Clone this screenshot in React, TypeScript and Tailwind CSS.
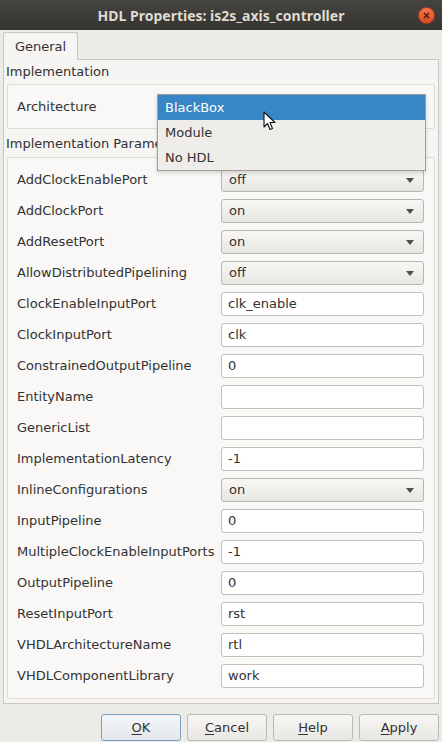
import React from 'react';

type Row = { label: string; kind: 'combo' | 'text'; value: string };

const rows: Row[] = [
  { label: 'AddClockEnablePort', kind: 'combo', value: 'off' },
  { label: 'AddClockPort', kind: 'combo', value: 'on' },
  { label: 'AddResetPort', kind: 'combo', value: 'on' },
  { label: 'AllowDistributedPipelining', kind: 'combo', value: 'off' },
  { label: 'ClockEnableInputPort', kind: 'text', value: 'clk_enable' },
  { label: 'ClockInputPort', kind: 'text', value: 'clk' },
  { label: 'ConstrainedOutputPipeline', kind: 'text', value: '0' },
  { label: 'EntityName', kind: 'text', value: '' },
  { label: 'GenericList', kind: 'text', value: '' },
  { label: 'ImplementationLatency', kind: 'text', value: '-1' },
  { label: 'InlineConfigurations', kind: 'combo', value: 'on' },
  { label: 'InputPipeline', kind: 'text', value: '0' },
  { label: 'MultipleClockEnableInputPorts', kind: 'text', value: '-1' },
  { label: 'OutputPipeline', kind: 'text', value: '0' },
  { label: 'ResetInputPort', kind: 'text', value: 'rst' },
  { label: 'VHDLArchitectureName', kind: 'text', value: 'rtl' },
  { label: 'VHDLComponentLibrary', kind: 'text', value: 'work' },
];

function Combo({ value }: { value: string }) {
  return (
    <div className="h-6 flex items-center justify-between pl-[7px] pr-[9px] rounded-[3px] border border-[#b9b5af] bg-linear-to-b from-[#f8f7f5] to-[#e8e6e2]">
      <span>{value}</span>
      <svg width="8" height="5" viewBox="0 0 8 5">
        <path d="M0 0h8L4 5z" fill="#4d4d4d" />
      </svg>
    </div>
  );
}

function TextField({ value }: { value: string }) {
  return (
    <div className="h-6 flex items-center pl-[6px] rounded-[3px] border border-[#c3bfb9] bg-white">
      {value}
    </div>
  );
}

function Button({ label, mnemonic, primary }: { label: string; mnemonic: number; primary?: boolean }) {
  return (
    <button
      className={
        'w-[80px] h-[27px] rounded-[3px] border flex items-center justify-center ' +
        (primary
          ? 'border-[#7c9fc4] bg-linear-to-b from-[#f4f6f8] to-[#e4e8ec]'
          : 'border-[#bcb8b2] bg-linear-to-b from-[#f7f6f4] to-[#e9e7e4]')
      }
    >
      <span>
        {label.slice(0, mnemonic)}
        <span className="underline underline-offset-2">{label[mnemonic]}</span>
        {label.slice(mnemonic + 1)}
      </span>
    </button>
  );
}

export default function App() {
  return (
    <div className="relative w-[442px] h-[742px] overflow-hidden bg-[#edebe8] text-[13px] text-[#323232] font-['DejaVu_Sans',sans-serif] flex flex-col">
      {/* Title bar */}
      <div className="h-[30px] shrink-0 flex items-center justify-center relative bg-linear-to-b from-[#45443f] to-[#363531]">
        <span className="font-['Noto_Sans',sans-serif] font-bold text-[14px] text-[#dfdbd2]">
          HDL Properties: is2s_axis_controller
        </span>
        <div className="absolute right-[7px] top-[7px] w-[17px] h-[17px] rounded-full bg-linear-to-b from-[#f47448] to-[#d84a1d] border border-[#a8401c] flex items-center justify-center">
          <svg width="7" height="7" viewBox="0 0 7 7">
            <path d="M1 1L6 6M6 1L1 6" stroke="#4a1a08" strokeWidth="1.3" />
          </svg>
        </div>
      </div>

      {/* Tabs */}
      <div className="px-[3px] pt-[2px] flex">
        <div className="w-[75px] h-[28px] -mb-px rounded-t-[3px] border border-b-0 border-[#c9c5bf] bg-[#f6f5f3] flex items-center justify-center relative z-10">
          General
        </div>
      </div>

      {/* Tab panel */}
      <div className="mx-[3px] h-[645px] border border-[#c9c5bf] bg-[#f6f5f3] px-[3px] flex flex-col">
        <div className="h-[24px] flex items-center -ml-px">Implementation</div>
        <div className="h-[45px] border border-[#dfdcd7] bg-[#f9f8f6] rounded-[2px] px-[9px] flex items-center">
          <div className="w-[140px]">Architecture</div>
          <div className="flex-1 pr-[1px]">
            <Combo value="BlackBox" />
          </div>
        </div>
        <div className="h-[27px] flex items-center -ml-px mt-[1px]">Implementation Parameters</div>
        <div className="h-[542px] border border-[#dfdcd7] bg-[#f9f8f6] rounded-[2px] pl-[9px] pr-[10px] pt-[10px] flex flex-col gap-[7px]">
          {rows.map((r) => (
            <div key={r.label} className="h-6 flex items-center">
              <div className="w-[204px] whitespace-nowrap">{r.label}</div>
              <div className="flex-1">
                {r.kind === 'combo' ? <Combo value={r.value} /> : <TextField value={r.value} />}
              </div>
            </div>
          ))}
        </div>
      </div>

      {/* Buttons */}
      <div className="flex justify-end gap-[6px] pr-[3px] mt-[10px]">
        <Button label="OK" mnemonic={0} primary />
        <Button label="Cancel" mnemonic={0} />
        <Button label="Help" mnemonic={0} />
        <Button label="Apply" mnemonic={0} />
      </div>

      {/* Open dropdown popup */}
      <div className="absolute left-[157px] top-[94px] w-[269px] h-[77px] border border-[#a19d97] bg-[#efedea] shadow-[0_2px_4px_rgba(0,0,0,0.15)] flex flex-col">
        <div className="h-[25px] bg-[#3786c6] text-white flex items-center pl-[7px]">BlackBox</div>
        <div className="h-[25px] flex items-center pl-[7px]">Module</div>
        <div className="h-[25px] flex items-center pl-[7px]">No HDL</div>
      </div>

      {/* Mouse cursor */}
      <svg className="absolute left-[263px] top-[111px]" width="14" height="21" viewBox="0 0 14 21">
        <path d="M1 1V16L4.5 12.5L7 18.5L9.5 17.5L7 11.5H12Z" fill="#fff" stroke="#111" strokeWidth="1.1" strokeLinejoin="round" />
      </svg>
    </div>
  );
}
